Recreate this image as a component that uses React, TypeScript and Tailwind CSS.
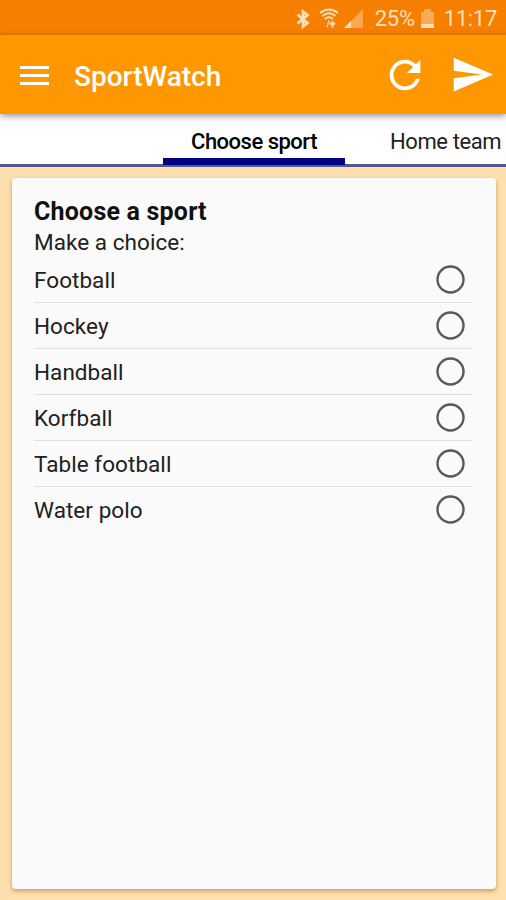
const sports = ['Football', 'Hockey', 'Handball', 'Korfball', 'Table football', 'Water polo'];

function StatusBar() {
  return (
    <div className="flex h-[35px] shrink-0 items-center justify-end bg-[#f77f00] pt-[3px] pr-[9px] text-[22px] leading-none text-[#ffe0bd]">
      <svg className="mb-px h-[20px] w-[14px]" viewBox="0 0 14 20" fill="none" stroke="currentColor" strokeWidth="2.700">
        <path d="M1.500 5.500 11.500 14 7 17.500V2.500l4.500 3.500L1.500 14.500" />
      </svg>
      <svg className="mb-[2px] ml-[9px] h-[20px] w-[20px]" viewBox="0 0 20 20" fill="none" stroke="currentColor">
        <path d="M1 5Q10 -2 19 5M3.500 8q6.500-5.500 13 0M6 11q4-3.500 8 0" strokeWidth="2" />
        <path d="M10 12.500l-2 6.500M10 12v3.500" strokeWidth="1.500" opacity=".7" />
        <path d="M13.500 19.500v-6M11 16.500l2.500-2.500 2.500 2.500" strokeWidth="1.800" />
      </svg>
      <svg className="ml-[5px] h-[20px] w-[19px]" viewBox="0 0 19 20" fill="currentColor">
        <path d="M0 19 19 0v19z" opacity=".42" />
        <path d="M0 19 7 12v7z" />
      </svg>
      <span className="ml-[12px] tracking-[-0.300px]">25%</span>
      <svg className="ml-[6px] h-[20px] w-[13px]" viewBox="0 0 13 20" fill="currentColor">
        <path d="M0 3h3V0h7v3h3v12H0z" opacity=".45" />
        <path d="M0 15h13v4H0z" />
      </svg>
      <span className="ml-[10px] tracking-[-0.300px]">11:17</span>
    </div>
  );
}

function AppBar() {
  return (
    <header className="relative z-10 flex h-[79px] shrink-0 items-center bg-[#ff9800] text-white shadow-[0_2px_7px_rgba(0,0,0,0.42)]">
      <div className="mt-px ml-[20px] flex w-[29px] flex-col gap-[5px]">
        <span className="h-[3px] bg-white" />
        <span className="h-[3px] bg-white" />
        <span className="h-[3px] bg-white" />
      </div>
      <h1 className="ml-[25px] pt-[4px] text-[28px] leading-none font-medium">SportWatch</h1>
      <svg className="ml-auto h-[46px] w-[46px]" viewBox="0 0 24 24" fill="currentColor">
        <path d="M17.650 6.350C16.200 4.900 14.210 4 12 4c-4.420 0-7.990 3.580-7.990 8s3.570 8 7.990 8c3.730 0 6.840-2.550 7.730-6h-2.080c-.82 2.330-3.040 4-5.650 4-3.310 0-6-2.690-6-6s2.690-6 6-6c1.660 0 3.140.69 4.220 1.780L13 11h7V4l-2.350 2.350z" />
      </svg>
      <svg className="mr-[11px] ml-[22px] h-[45px] w-[45px]" viewBox="0 0 24 24" fill="currentColor">
        <path d="M2.010 21 23 12 2.010 3 2 10l15 2-15 2z" />
      </svg>
    </header>
  );
}

function Tabs() {
  return (
    <nav className="flex h-[53px] shrink-0 border-b-[3px] border-[#56568f] bg-white pl-[163px] text-[22px] leading-none text-black">
      <div className="-mb-px flex w-[182px] shrink-0 justify-center border-b-[7px] border-[#020282] pt-[17px] font-medium tracking-[-0.500px] whitespace-nowrap">
        <span>Choose sport</span>
      </div>
      <div className="ml-[45px] pt-[17px] tracking-[-0.400px] whitespace-nowrap text-[#222]">Home team</div>
    </nav>
  );
}

export default function App() {
  return (
    <div className="flex h-[900px] w-[506px] flex-col overflow-hidden bg-[#ffdfae] font-[Roboto,sans-serif]">
      <StatusBar />
      <AppBar />
      <Tabs />
      <main className="mr-[10px] ml-[12px] mt-[11px] mb-[11px] flex-1 rounded-[4px] bg-[#fafafa] pr-[23px] pl-[22px] text-[#212121] shadow-[0_2px_4px_rgba(100,60,0,0.4)]">
        <h2 className="pt-[22px] text-[25px] leading-[24px] font-bold tracking-[0.200px] text-[#111]">Choose a sport</h2>
        <p className="pt-[6px] text-[22.500px] leading-[24px] tracking-[0.050px]">Make a choice:</p>
        <ul className="mt-[3px]">
          {sports.map((sport) => (
            <li key={sport} className="flex h-[46px] items-center justify-between border-b border-[#e0e0e0] pr-[8px] text-[22.500px] leading-none tracking-[0.050px] last:border-transparent">
              <span className="pt-[2px]">{sport}</span>
              <svg className="mb-px size-[29px]" viewBox="0 0 29 29" fill="none" stroke="#5a5a5a" strokeWidth="2.400">
                <circle cx="14.500" cy="14.500" r="13" />
              </svg>
            </li>
          ))}
        </ul>
      </main>
    </div>
  );
}
